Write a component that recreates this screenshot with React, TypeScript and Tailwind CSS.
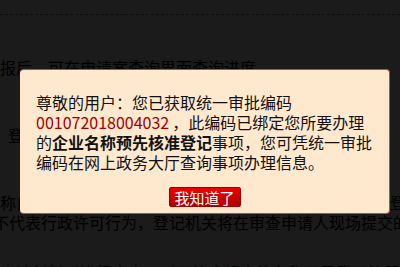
const FONT = "font-['Noto_Sans_CJK_SC','Noto_Sans',sans-serif]";

export default function App() {
  return (
    <div className={`relative h-[267px] w-[400px] overflow-hidden bg-[#1b1b1b] text-[16px] leading-[20px] text-black ${FONT}`}>
      {/* page behind the mask */}
      <div className="pt-[14px]">
        <div className="border-t border-dashed border-[#0e0e0e]" />
        <p className="mt-[42px] whitespace-nowrap">报后，可在申请案查询界面查询进度。</p>
        <p className="ml-[8px] mt-[48px] whitespace-nowrap">登记机关核准后，申请人可领取名称预先核准通知书</p>
        <div className="mt-[47px] flex w-[406px] justify-between whitespace-nowrap">
          <span>称自主申报成功只表示系统比对未发现</span>
          <span>登</span>
        </div>
        <p className="-ml-[7px] whitespace-nowrap">不代表行政许可行为，登记机关将在审查申请人现场提交的材料</p>
        <p className="mt-[30px] whitespace-nowrap">申请材料时进行审查，对不符合规定的名称不予登记注册。</p>
      </div>

      {/* dialog */}
      <div className="absolute left-[20px] top-[69px] h-[145px] w-[370px] rounded-[4px] border-t border-r border-b border-[#e8392c] bg-[#fee9cf] px-4 pt-[22px]">
        <p className="text-[#111]">
          尊敬的用户：您已获取统一审批编码
          <span className="text-[#a10000]">001072018004032</span>
          <span className="ml-[3px]">，</span>此编码已绑定您所要办理的<b className="font-bold">企业名称预先核准登记</b>事项，您可凭统一审批编码在网上政务大厅查询事项办理信息。
        </p>
        <button className="mx-auto mt-[15px] flex h-[20px] w-[72px] items-center justify-center rounded-[2px] border border-[#9c0000] bg-gradient-to-b from-[#f00000] to-[#a80000] text-[15px] leading-none text-white">
          我知道了
        </button>
      </div>
    </div>
  );
}
